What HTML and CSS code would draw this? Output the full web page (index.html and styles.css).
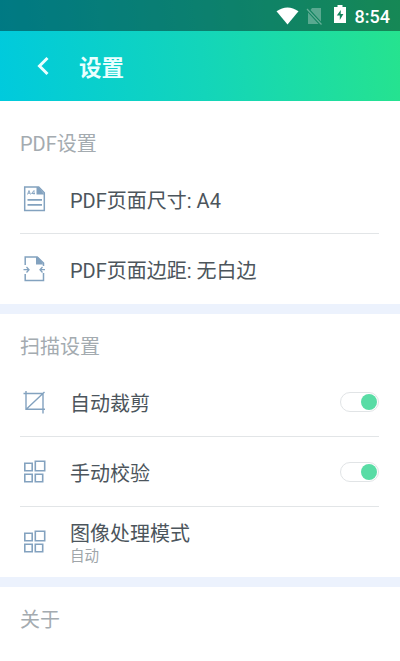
FILE: index.html
```html
<!DOCTYPE html>
<html lang="zh-CN">
<head>
<meta charset="utf-8">
<title>设置</title>
<link rel="stylesheet" href="styles.css">
</head>
<body>
<div class="top">
  <div class="status">
    <svg class="wifi" width="24" height="18" viewBox="0 0 24 18"><path d="M0.500 4.300Q11.500 -3.300 22.500 4.300L11.500 17.500Z" fill="#fff"/></svg>
    <svg class="sim" width="17" height="18" viewBox="0 0 17 18"><path d="M6 1h9v13.500L4.500 3ZM2 5.500L12.500 17H2Z" fill="#fff" opacity=".3"/><path d="M1 2L15.500 17.500" stroke="#fff" stroke-width="1.200" opacity=".35"/></svg>
    <svg class="battery" width="12" height="18" viewBox="0 0 12 18"><path d="M3.500 0h5v2H12v16H0V2h3.500ZM6.800 5L2.800 10.500h3V15L9.400 9H6.700Z" fill="#fff" fill-rule="evenodd"/></svg>
    <span class="clock">8:54</span>
  </div>
  <header class="bar">
    <svg class="back" width="12" height="20" viewBox="0 0 12 20"><path d="M10.500 2L2.500 10l8 8" fill="none" stroke="#eaffff" stroke-width="3"/></svg>
    <h1>设置</h1>
  </header>
</div>
<main>
  <section>
    <h2>PDF设置</h2>
    <div class="row">
      <svg class="icon" width="24" height="26" viewBox="0 0 24 26"><path d="M1.700 1h14L21.300 6.700V24.500H1.700Z" fill="none" stroke="#83a2bf" stroke-width="1.500"/><path d="M13.500 1v7.500H21.500L15.500 1Z" fill="#83a2bf"/><path d="M4.500 8.500L6 4.500l1.500 4M5 7.200h2M11 8.500v-4L8.600 7.500H12" fill="none" stroke="#83a2bf" stroke-width=".9"/><path d="M4.500 13.800h14.500M4.500 18.800h14.500" stroke="#83a2bf" stroke-width="1.700"/></svg>
      <span class="label">PDF页面尺寸: A4</span>
    </div>
    <div class="row">
      <svg class="icon" width="24" height="26" viewBox="0 0 24 26"><path d="M2.200 9V1h12L20.500 7v3M2.200 18v6.500H20.500V17" fill="none" stroke="#83a2bf" stroke-width="1.500"/><path d="M13 1v7.500H20.500L15 1Z" fill="#83a2bf"/><path d="M0.500 13.700H5.500M3.500 11L6 13.700L3.500 16.500M22 13.700H17M19.500 11L17 13.700L19.500 16.500" fill="none" stroke="#83a2bf" stroke-width="1.300"/></svg>
      <span class="label">PDF页面边距: 无白边</span>
    </div>
  </section>
  <section>
    <h2>扫描设置</h2>
    <div class="row">
      <svg class="icon" width="24" height="26" viewBox="0 0 24 26"><path d="M0.500 4.500h19.500v20M3 2v18.300H22M3.500 20L21.500 3" fill="none" stroke="#83a2bf" stroke-width="1.400"/></svg>
      <span class="label">自动裁剪</span>
      <span class="switch"></span>
    </div>
    <div class="row">
      <svg class="icon" width="24" height="26" viewBox="0 0 24 26"><path d="M1.800 4.300h7.400v7.400H1.800ZM12.300 2.300h9.400v9.400H12.300ZM1.800 15.300h7.400v7.400H1.800ZM12.300 15.300h7.400v7.400H12.300Z" fill="none" stroke="#83a2bf" stroke-width="1.600"/></svg>
      <span class="label">手动校验</span>
      <span class="switch"></span>
    </div>
    <div class="row">
      <svg class="icon" width="24" height="26" viewBox="0 0 24 26"><path d="M1.800 4.300h7.400v7.400H1.800ZM12.300 2.300h9.400v9.400H12.300ZM1.800 15.300h7.400v7.400H1.800ZM12.300 15.300h7.400v7.400H12.300Z" fill="none" stroke="#83a2bf" stroke-width="1.600"/></svg>
      <div class="label detail">图像处理模式<small>自动</small></div>
    </div>
  </section>
  <section>
    <h2>关于</h2>
  </section>
</main>
</body>
</html>
```
FILE: styles.css
```css
* { box-sizing: border-box; }
html, body { margin: 0; height: 100%; overflow: hidden; }
body {
  background: #fff;
  color: #4c555c;
  font-family: Roboto, "Noto Sans CJK SC", sans-serif;
}
.top { background: linear-gradient(84deg, #00cadd, #13d5ba 50%, #26e38e); }
.status {
  height: 31px;
  display: flex;
  align-items: center;
  justify-content: flex-end;
  padding-right: 10px;
  background: rgba(0, 0, 0, .4);
}
.wifi { margin-right: 6px; }
.sim { margin-right: 11px; }
.battery { margin: 0 9px 3px 0; }
.clock {
  color: #fff;
  font: 500 18px/31px Roboto, sans-serif;
  padding-top: 2px;
}
.bar {
  height: 70px;
  display: flex;
  align-items: center;
  padding-left: 37px;
}
h1 {
  margin: 3px 0 0 30px;
  color: #eaffff;
  font-size: 22.500px;
  line-height: 32px;
  font-weight: 700;
}
section:first-child { padding-top: 10px; }
section + section { border-top: 10px solid #ecf2fd; }
h2 {
  margin: 0;
  height: 53px;
  padding: 18px 20px 0;
  color: #a4abb0;
  font-size: 20px;
  line-height: 30px;
  font-weight: 400;
}
.row {
  height: 70px;
  margin: 0 21px 0 20px;
  display: flex;
  align-items: center;
}
.row:not(:last-child) { border-bottom: 1px solid #e2e5e7; }
.icon { width: 24px; margin-right: 23px; margin-left: 3px; flex: none; }
.label { flex: 1; padding-top: 4px; font-size: 20px; line-height: 28px; }
.detail { padding-top: 2px; }
small { display: block; font-size: 14.500px; line-height: 18px; color: #a0a6aa; }
.switch {
  width: 39px;
  height: 20px;
  padding: 1px;
  border: 1px solid #e1e4e6;
  border-radius: 10px;
  display: flex;
  justify-content: flex-end;
}
.switch::after {
  content: "";
  width: 16px;
  height: 16px;
  border-radius: 50%;
  background: #59dca5;
}
```
